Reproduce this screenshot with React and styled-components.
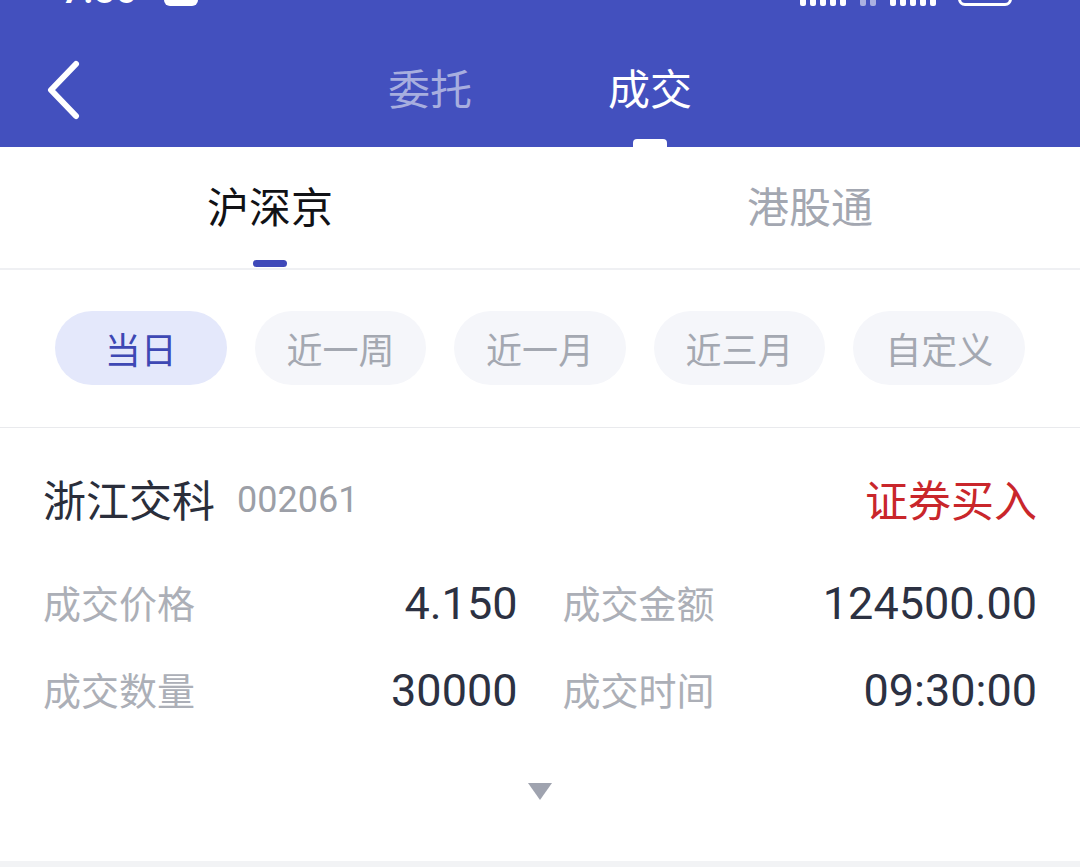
import React from 'react';
import styled, { createGlobalStyle } from 'styled-components';

const GlobalStyle = createGlobalStyle`
  html, body {
    margin: 0;
    padding: 0;
    background: #ffffff;
  }
  body {
    font-family: "Noto Sans CJK SC", "Noto Sans", sans-serif;
  }
`;

const Page = styled.div`
  width: 1080px;
  height: 867px;
  overflow: hidden;
  display: flex;
  flex-direction: column;
  background: #ffffff;
`;

const Header = styled.div`
  background-color: #4350be;
  display: flex;
  flex-direction: column;
`;

const StatusBar = styled.div`
  height: 6px;
  overflow: hidden;
  display: flex;
  align-items: flex-end;
  padding: 0 68px 0 62px;
  color: #ffffff;
`;

const StatusTime = styled.div`
  font-family: Roboto, sans-serif;
  font-weight: 700;
  font-size: 34px;
  line-height: 34px;
  margin-bottom: -2px;
  letter-spacing: 2px;
`;

const NotifyIcon = styled.div`
  width: 34px;
  height: 30px;
  border-radius: 6px;
  background: #ffffff;
  margin-left: 26px;
`;

const StatusRight = styled.div`
  margin-left: auto;
  display: flex;
  align-items: flex-end;
  gap: 14px;
`;

const SignalDots = styled.div`
  display: flex;
  gap: 4px;
  align-items: flex-end;
  opacity: ${p => (p.$dim ? 0.55 : 1)};
`;

const Dot = styled.span`
  width: 6px;
  height: 20px;
  background: #ffffff;
  border-radius: 2px;
`;

const Battery = styled.div`
  width: 54px;
  height: 26px;
  border: 3px solid #ffffff;
  border-radius: 7px;
  box-sizing: border-box;
  margin-left: 8px;
`;

const NavBar = styled.div`
  height: 141px;
  display: grid;
  grid-template-columns: 1fr auto 1fr;
`;

const BackButton = styled.div`
  display: flex;
  align-items: center;
  padding-left: 42px;
  padding-top: 26px;
`;

const NavTabs = styled.div`
  display: flex;
  gap: 136px;
`;

const NavTab = styled.div`
  display: flex;
  flex-direction: column;
  align-items: center;
  justify-content: flex-end;
  font-size: 42px;
  color: ${p => (p.$active ? '#ffffff' : '#a7aedf')};
`;

const NavLabel = styled.div`
  line-height: 60px;
  margin-bottom: 22px;
`;

const NavIndicator = styled.div`
  width: 34px;
  height: 8px;
  border-radius: 4px 4px 0 0;
  background: ${p => (p.$active ? '#ffffff' : 'transparent')};
`;

const Market = styled.div`
  height: 121px;
  display: grid;
  grid-template-columns: 1fr 1fr;
  border-bottom: 2px solid #eff0f3;
`;

const MarketTab = styled.div`
  display: flex;
  flex-direction: column;
  align-items: center;
  font-size: 42px;
  color: ${p => (p.$active ? '#111216' : '#a3a7b1')};
`;

const MarketLabel = styled.div`
  line-height: 60px;
  margin-top: 28px;
`;

const MarketIndicator = styled.div`
  margin-top: 25px;
  width: 34px;
  height: 7px;
  border-radius: 4px;
  background: ${p => (p.$active ? '#3f49b9' : 'transparent')};
`;

const Filters = styled.div`
  display: flex;
  gap: 28px;
  padding: 41px 55px 42px;
  border-bottom: 1px solid #e9eaed;
`;

const Chip = styled.div`
  width: 172px;
  height: 74px;
  border-radius: 37px;
  display: flex;
  align-items: center;
  justify-content: center;
  font-size: 36px;
  background: ${p => (p.$active ? '#e4e8fb' : '#f5f6fa')};
  color: ${p => (p.$active ? '#3e48b4' : '#a4a8b1')};
`;

const Card = styled.div`
  padding: 40px 43px 0;
  display: flex;
  flex-direction: column;
`;

const TitleRow = styled.div`
  display: flex;
  align-items: center;
  height: 60px;
`;

const StockName = styled.div`
  font-size: 43px;
  color: #2a2e3b;
`;

const StockCode = styled.div`
  font-family: Roboto, sans-serif;
  font-size: 36px;
  color: #9c9fa7;
  margin-left: 22px;
  margin-top: 4px;
`;

const Side = styled.div`
  margin-left: auto;
  font-size: 43px;
  color: #c9262b;
`;

const Details = styled.div`
  margin-top: 45px;
  display: grid;
  grid-template-columns: 1fr 1fr;
  column-gap: 45px;
  row-gap: 27px;
`;

const Field = styled.div`
  display: flex;
  align-items: center;
  justify-content: space-between;
  height: 60px;
`;

const FieldLabel = styled.div`
  font-size: 38px;
  color: #acafb7;
  margin-top: -4px;
`;

const FieldValue = styled.div`
  font-family: Roboto, sans-serif;
  font-size: 45px;
  color: #2c3142;
`;

const Expand = styled.div`
  display: flex;
  justify-content: center;
  margin-top: 63px;
`;

const BottomBand = styled.div`
  margin-top: auto;
  height: 6px;
  background: #f2f3f5;
`;

const details = [
  { label: '成交价格', value: '4.150' },
  { label: '成交金额', value: '124500.00' },
  { label: '成交数量', value: '30000' },
  { label: '成交时间', value: '09:30:00' },
];

const filters = ['当日', '近一周', '近一月', '近三月', '自定义'];

export default function App() {
  return (
    <Page>
      <GlobalStyle />
      <Header>
        <StatusBar>
          <StatusTime>7:35</StatusTime>
          <NotifyIcon />
          <StatusRight>
            <SignalDots>
              {[0, 1, 2, 3, 4].map(i => <Dot key={i} />)}
            </SignalDots>
            <SignalDots $dim>
              {[0, 1].map(i => <Dot key={i} />)}
            </SignalDots>
            <SignalDots>
              {[0, 1, 2, 3, 4].map(i => <Dot key={i} />)}
            </SignalDots>
            <Battery />
          </StatusRight>
        </StatusBar>
        <NavBar>
          <BackButton>
            <svg width="42" height="60" viewBox="0 0 42 60">
              <path d="M34 4 L9 30 L34 56" fill="none" stroke="#ffffff" strokeWidth="6" strokeLinecap="round" strokeLinejoin="round" />
            </svg>
          </BackButton>
          <NavTabs>
            <NavTab>
              <NavLabel>委托</NavLabel>
              <NavIndicator />
            </NavTab>
            <NavTab $active>
              <NavLabel>成交</NavLabel>
              <NavIndicator $active />
            </NavTab>
          </NavTabs>
          <div />
        </NavBar>
      </Header>

      <Market>
        <MarketTab $active>
          <MarketLabel>沪深京</MarketLabel>
          <MarketIndicator $active />
        </MarketTab>
        <MarketTab>
          <MarketLabel>港股通</MarketLabel>
          <MarketIndicator />
        </MarketTab>
      </Market>

      <Filters>
        {filters.map((f, i) => (
          <Chip key={f} $active={i === 0}>{f}</Chip>
        ))}
      </Filters>

      <Card>
        <TitleRow>
          <StockName>浙江交科</StockName>
          <StockCode>002061</StockCode>
          <Side>证券买入</Side>
        </TitleRow>
        <Details>
          {details.map(d => (
            <Field key={d.label}>
              <FieldLabel>{d.label}</FieldLabel>
              <FieldValue>{d.value}</FieldValue>
            </Field>
          ))}
        </Details>
        <Expand>
          <svg width="24" height="17" viewBox="0 0 24 17">
            <path d="M0 0 H24 L12 17 Z" fill="#9fa3af" />
          </svg>
        </Expand>
      </Card>
      <BottomBand />
    </Page>
  );
}
